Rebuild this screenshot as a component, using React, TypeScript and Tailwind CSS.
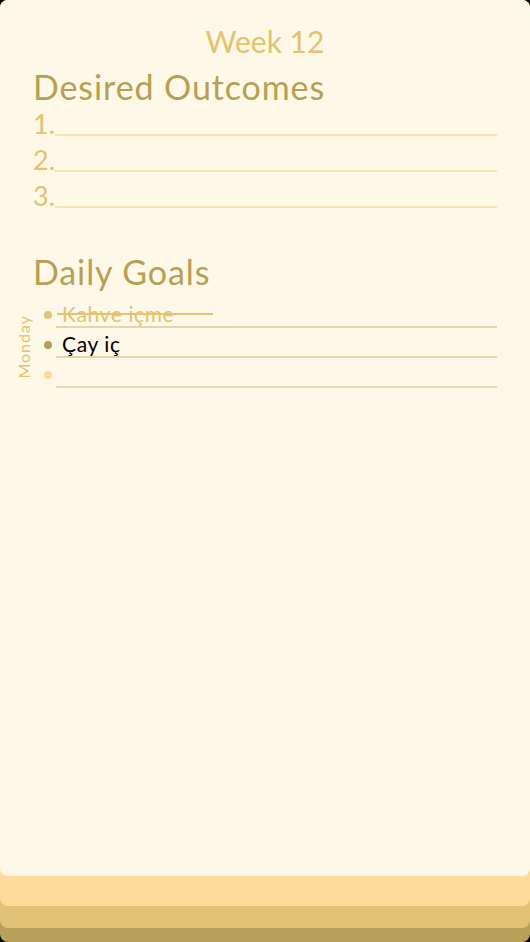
import React from "react";

const font = { fontFamily: "Lato, 'Open Sans', sans-serif" };

function OutcomeRow({ n }: { n: number }) {
  return (
    <div className="flex h-[36px]">
      <span className="w-[22px] text-[27px] leading-[36px] text-[#e3c270]">{n}.</span>
      <div className="flex-1 self-end mb-[6px] h-[2px] bg-[#f7e2b2]" />
    </div>
  );
}

function GoalRow({
  bullet,
  line,
  children,
}: {
  bullet: string;
  line: string;
  children?: React.ReactNode;
}) {
  return (
    <div className="flex h-[30px]">
      <div className="w-[16px] flex justify-center pt-[13px]">
        <div className={`w-[8px] h-[8px] rounded-full ${bullet}`} />
      </div>
      <div className={`relative flex-1 flex items-end border-b-2 ${line}`}>{children}</div>
    </div>
  );
}

export default function App() {
  return (
    <div className="w-[530px] h-[942px] bg-black" style={font}>
      <div className="h-full bg-[#b9a05a] rounded-[8px] pb-[14px]">
        <div className="h-full bg-[#e2c277] rounded-[8px] pb-[22px]">
          <div className="h-full bg-[#fedb9a] rounded-[8px] pb-[30px]">
            <div className="h-full bg-[#fef8e9] rounded-[8px] px-[33px] pt-[23px] flex flex-col">
              <div className="text-center text-[30px] leading-[36px] text-[#e3c270]">Week 12</div>
              <div className="mt-[8px] text-[34px] leading-[39px] tracking-[0.9px] text-[#b89f52]">
                Desired Outcomes
              </div>
              <div className="flex flex-col">
                <OutcomeRow n={1} />
                <OutcomeRow n={2} />
                <OutcomeRow n={3} />
              </div>
              <div className="mt-[38px] text-[34px] leading-[40px] tracking-[0.9px] text-[#b89f52]">
                Daily Goals
              </div>
              <div className="mt-[6px] ml-[-18px] flex">
                <div className="w-[18px] flex items-center justify-center pt-[8px]">
                  <span className="[writing-mode:vertical-rl] rotate-180 text-[16px] leading-[16px] tracking-[1px] text-[#e3c270]">
                    Monday
                  </span>
                </div>
                <div className="flex-1 ml-[7px] flex flex-col">
                  <GoalRow bullet="bg-[#e2c274]" line="border-[#e3d6a8]">
                    <span className="pl-[6px] text-[21px] leading-[24px] tracking-[0.6px] text-[#e3c270]">
                      Kahve içme
                    </span>
                    <div className="absolute left-[1px] top-[15px] w-[156px] h-[2px] bg-[#e3c270]" />
                  </GoalRow>
                  <GoalRow bullet="bg-[#b9a05a]" line="border-[#e3d6a8]">
                    <span className="pl-[6px] text-[21px] leading-[24px] tracking-[0.6px] text-black">
                      Çay iç
                    </span>
                  </GoalRow>
                  <GoalRow bullet="bg-[#fcd996]" line="border-[#d9dbb3]" />
                </div>
              </div>
            </div>
          </div>
        </div>
      </div>
    </div>
  );
}
